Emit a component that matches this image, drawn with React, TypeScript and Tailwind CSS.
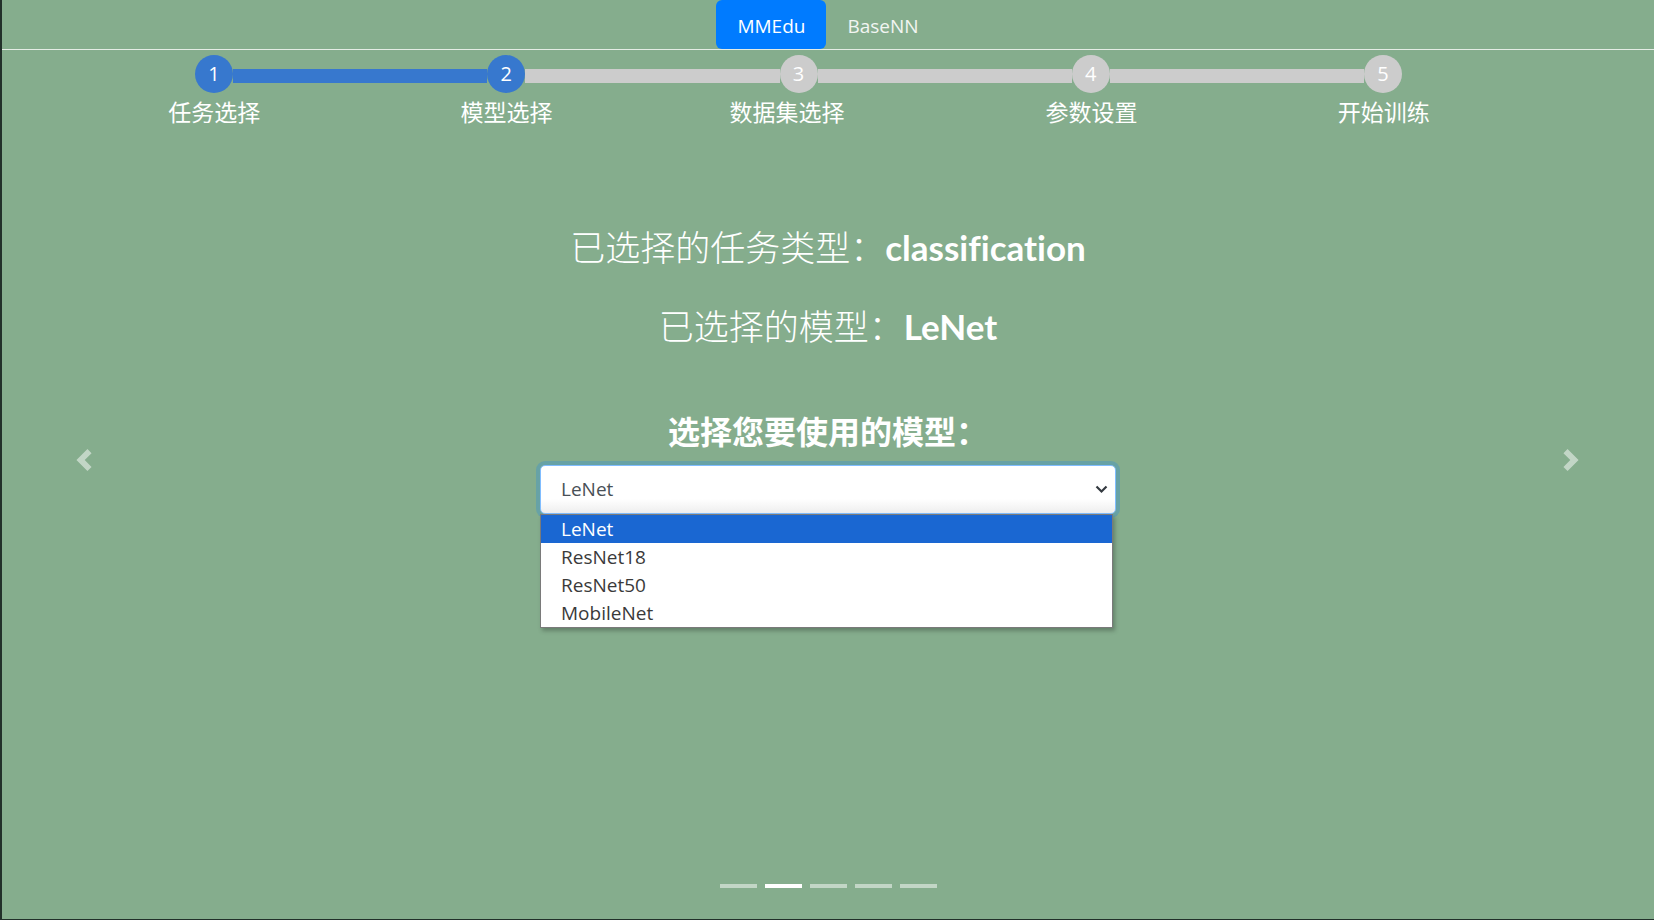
const steps = ["任务选择", "模型选择", "数据集选择", "参数设置", "开始训练"];
const models = ["LeNet", "ResNet18", "ResNet50", "MobileNet"];

const App = () => {
  const current = 2;

  return (
    <div className="relative w-[1654px] h-[920px] overflow-hidden bg-[#85ad8d] border-l-2 border-b border-[#22302a] font-[family-name:'Open_Sans','Noto_Sans_CJK_SC',sans-serif]">
      {/* Top tabs */}
      <div className="h-[50px] border-b border-[#e4ece5] flex justify-center">
        <button className="h-[49px] pt-[3px] px-[21px] rounded-md bg-[#007bff] text-white text-[19px]">MMEdu</button>
        <button className="h-[49px] pt-[3px] px-[21px] text-[#f2f5f2] text-[19px]">BaseNN</button>
      </div>

      {/* Steps */}
      <div className="mt-[5px] ml-[193px] w-[1207px] flex items-center">
        {steps.map((_, i) => (
          <div key={i} className={i === steps.length - 1 ? "flex items-center" : "flex items-center flex-1"}>
            <div
              className={
                i < current
                  ? "w-[38px] h-[38px] shrink-0 rounded-full bg-[#3778ce] text-white text-[20px] flex items-center justify-center"
                  : "w-[38px] h-[38px] shrink-0 rounded-full bg-[#cccccc] text-white text-[20px] flex items-center justify-center"
              }
            >
              {i + 1}
            </div>
            {i < steps.length - 1 && (
              <div className={i < current - 1 ? "flex-1 h-[14px] mt-[3px] bg-[#3778ce]" : "flex-1 h-[14px] mt-[3px] bg-[#cccccc]"} />
            )}
          </div>
        ))}
      </div>
      <div className="mt-[3px] ml-[66px] w-[1462px] grid grid-cols-5">
        {steps.map((s, i) => (
          <div
            key={s}
            className={
              i === 2
                ? "pr-[24px] text-center text-white text-[23px] leading-[30px] font-['Noto_Sans_CJK_SC',sans-serif]"
                : "text-center text-white text-[23px] leading-[30px] font-['Noto_Sans_CJK_SC',sans-serif]"
            }
          >
            {s}
          </div>
        ))}
      </div>

      {/* Content */}
      <div className="flex flex-col items-center text-white font-['Noto_Sans_CJK_SC',sans-serif]">
        <h2 className="mt-[96px] text-[35px] leading-[48px] font-light">
          已选择的任务类型：<span className="font-bold font-['Lato',sans-serif] [font-variant-ligatures:none]">classification</span>
        </h2>
        <h2 className="mt-[30px] text-[35px] leading-[48px] font-light">
          已选择的模型：<span className="font-bold font-['Lato',sans-serif]">LeNet</span>
        </h2>
        <h3 className="mt-[58px] text-[32px] leading-[44px] font-bold">选择您要使用的模型：</h3>

        <div className="relative mt-[13px] w-[576px] font-['Open_Sans',sans-serif]">
          <div className="h-[49px] rounded-[5px] border border-[#80bdff] bg-gradient-to-b from-white from-70% to-[#eeeeee] shadow-[0_0_0_4px_rgba(0,123,255,0.22)] flex items-center justify-between pl-[20px] pr-[7px] text-[#495057] text-[19px]">
            <span>LeNet</span>
            <svg width="13" height="9" viewBox="0 0 13 9" fill="none" stroke="#343a40" strokeWidth="2.2">
              <path d="M1.5 1.5l5 5 5-5" />
            </svg>
          </div>
          <div className="absolute top-full left-0 w-[573px] bg-white border border-[#7a7a7a] shadow-[2px_3px_4px_rgba(0,0,0,0.25)] z-10">
            {models.map((m, i) => (
              <div
                key={m}
                className={
                  i === 0
                    ? "h-[28px] pl-[20px] flex items-center bg-[#1a67d2] text-white text-[19px]"
                    : "h-[28px] pl-[20px] flex items-center text-[#3a3a3a] text-[19px]"
                }
              >
                {m}
              </div>
            ))}
          </div>
        </div>
      </div>

      {/* Carousel controls */}
      <button className="absolute left-[71px] top-[449px]">
        <svg width="22" height="22" viewBox="0 0 8 8" fill="rgba(255,255,255,0.5)">
          <path d="M5.25 0l-4 4 4 4 1.5-1.5L4.25 4l2.5-2.5L5.25 0z" />
        </svg>
      </button>
      <button className="absolute left-[1558px] top-[449px]">
        <svg width="22" height="22" viewBox="0 0 8 8" fill="rgba(255,255,255,0.5)">
          <path d="M2.75 0l-1.5 1.5L3.75 4l-2.5 2.5L2.75 8l4-4-4-4z" />
        </svg>
      </button>

      {/* Indicators */}
      <div className="absolute inset-x-0 bottom-[31px] flex justify-center gap-[8px]">
        {[0, 1, 2, 3, 4].map((i) => (
          <div key={i} className={i === 1 ? "w-[37px] h-[4px] bg-white" : "w-[37px] h-[4px] bg-white/50"} />
        ))}
      </div>
    </div>
  );
};

export default App;
